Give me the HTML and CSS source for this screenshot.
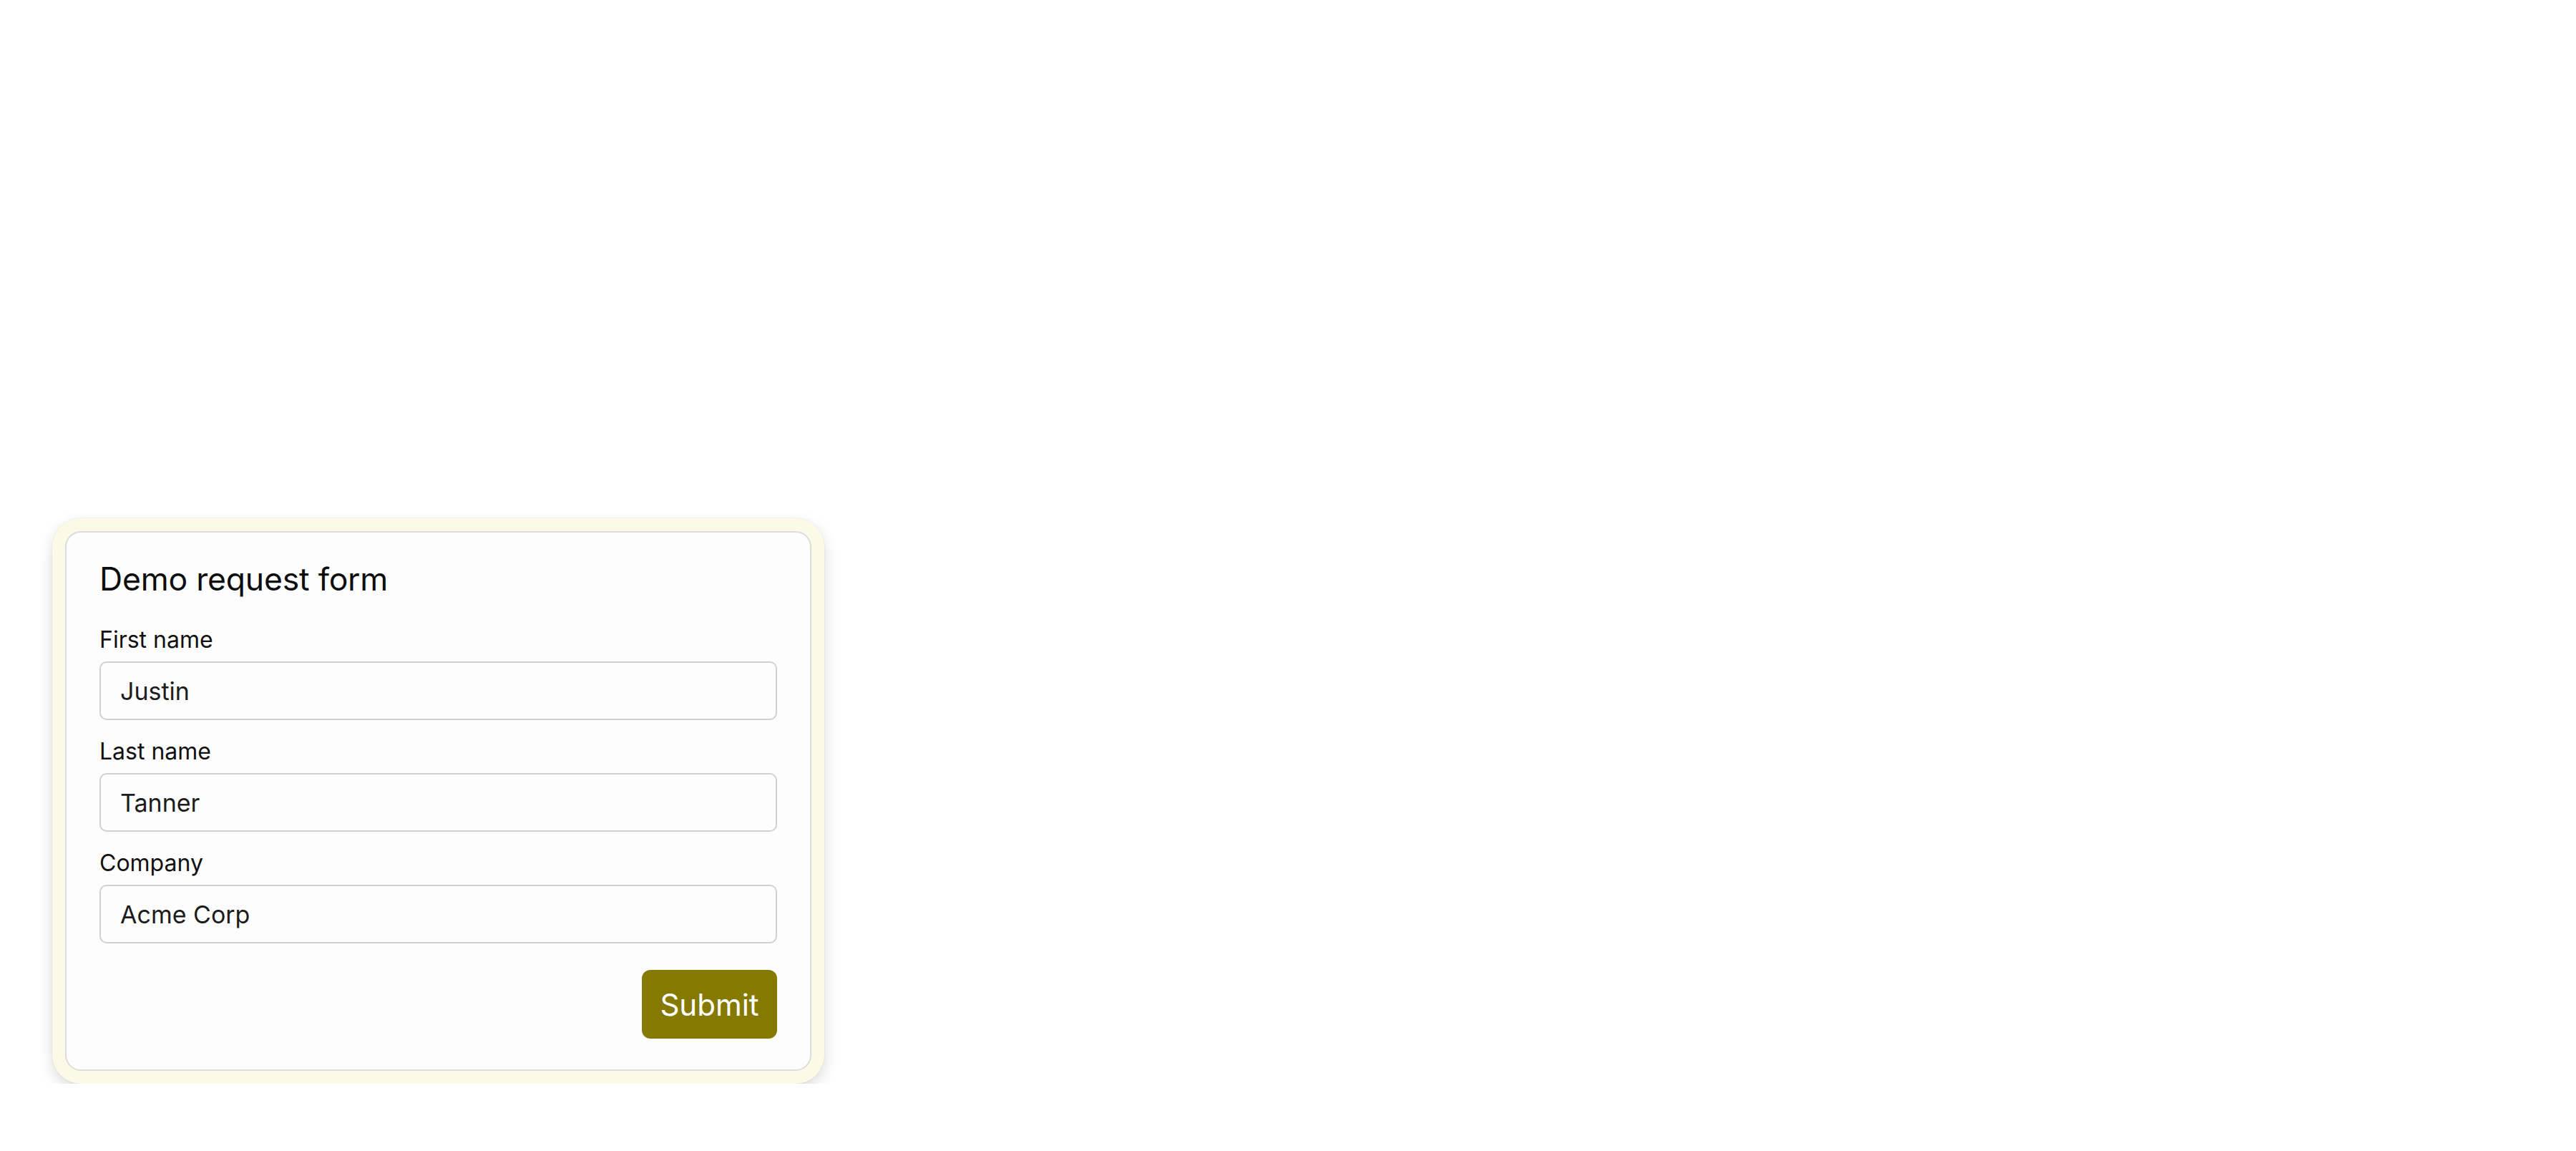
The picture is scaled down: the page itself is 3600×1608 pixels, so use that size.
FILE: index.html
```html
<!DOCTYPE html>
<html lang="en">
<head>
<meta charset="utf-8">
<title>Demo request form</title>
<link rel="stylesheet" href="styles.css">
</head>
<body>
  <div class="frame">
    <form class="card">
      <h2 class="title">Demo request form</h2>
      <div class="fields">
        <div class="field">
          <label class="label" for="first">First name</label>
          <input class="input" id="first" type="text" value="Justin">
        </div>
        <div class="field">
          <label class="label" for="last">Last name</label>
          <input class="input" id="last" type="text" value="Tanner">
        </div>
        <div class="field">
          <label class="label" for="company">Company</label>
          <input class="input" id="company" type="text" value="Acme Corp">
        </div>
      </div>
      <div class="actions">
        <button class="submit" type="button">Submit</button>
      </div>
    </form>
  </div>
</body>
</html>
```

FILE: styles.css
```css
html, body {
  margin: 0;
  background: #ffffff;
}

body {
  padding: 724px 0 0 73px;
  font-family: Inter, "Noto Sans", sans-serif;
  color: #111111;
}

.frame {
  width: 1079px;
  box-sizing: border-box;
  padding: 18px;
  background: #fbfae6;
  border-radius: 40px;
  box-shadow: 0 0 0 1px rgba(0, 0, 0, 0.03), 0 8px 20px rgba(0, 0, 0, 0.14);
}

.card {
  display: flex;
  flex-direction: column;
  box-sizing: border-box;
  background: #fdfdfd;
  border: 2px solid #dcdcdc;
  border-radius: 22px;
  padding: 38px 46px 43px;
}

.title {
  margin: 0;
  font-size: 44.5px;
  line-height: 54px;
  font-weight: 400;
  color: #0d0d0d;
  letter-spacing: -0.2px;
}

.fields {
  display: flex;
  flex-direction: column;
  gap: 26px;
  margin-top: 40px;
}

.field {
  display: flex;
  flex-direction: column;
  gap: 12px;
}

.label {
  font-size: 32px;
  line-height: 36px;
  font-weight: 400;
  color: #111111;
}

.input {
  height: 82px;
  box-sizing: border-box;
  border: 2px solid #d0d0d2;
  border-radius: 10px;
  background: #fdfdfd;
  padding: 0 27px;
  font-family: Inter, "Noto Sans", sans-serif;
  font-size: 34px;
  color: #1c1c1c;
  outline: none;
}

.actions {
  display: flex;
  justify-content: flex-end;
  margin-top: 37px;
}

.submit {
  height: 96px;
  width: 189px;
  border: none;
  border-radius: 12px;
  background: #867900;
  color: #ffffff;
  font-family: Inter, "Noto Sans", sans-serif;
  font-size: 42px;
  font-weight: 400;
  padding: 0;
  cursor: pointer;
}
```
